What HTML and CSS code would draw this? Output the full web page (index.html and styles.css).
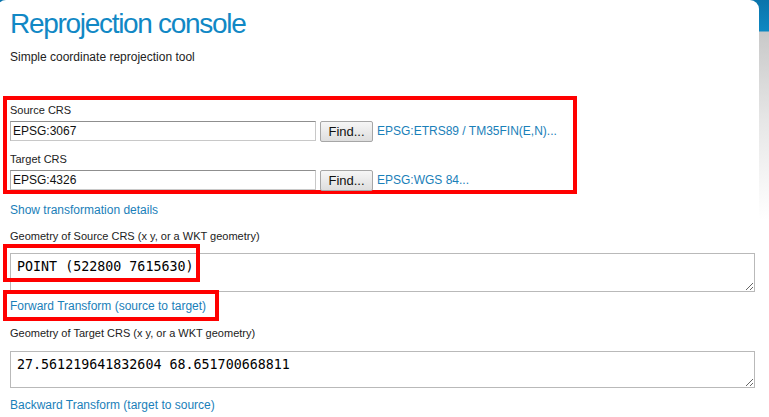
FILE: index.html
```html
<!DOCTYPE html>
<html>
<head>
<meta charset="utf-8">
<link rel="stylesheet" href="styles.css">
</head>
<body>
<div class="page">
  <main class="card">
    <h1 class="title">Reprojection console</h1>
    <p class="subtitle">Simple coordinate reprojection tool</p>

    <section class="crs-box">
      <div class="field-label">Source CRS</div>
      <div class="crs-row">
        <input class="crs-input" type="text" value="EPSG:3067">
        <button class="find-btn" type="button">Find...</button>
        <a class="link" href="#">EPSG:ETRS89 / TM35FIN(E,N)...</a>
      </div>
      <div class="field-label field-label-second">Target CRS</div>
      <div class="crs-row">
        <input class="crs-input" type="text" value="EPSG:4326">
        <button class="find-btn" type="button">Find...</button>
        <a class="link" href="#">EPSG:WGS 84...</a>
      </div>
    </section>

    <a class="link block-link details-link" href="#">Show transformation details</a>

    <div class="field-label geom-label">Geometry of Source CRS (x y, or a WKT geometry)</div>
    <div class="ta-wrap">
      <textarea class="geom-ta">POINT (522800 7615630)</textarea>
      <div class="mark mark-point"></div>
    </div>

    <div class="action-wrap">
      <a class="link block-link" href="#">Forward Transform (source to target)</a>
      <div class="mark mark-forward"></div>
    </div>

    <div class="field-label geom-label-2">Geometry of Target CRS (x y, or a WKT geometry)</div>
    <div class="ta-wrap ta-wrap-2">
      <textarea class="geom-ta geom-ta-2">27.561219641832604 68.651700668811</textarea>
    </div>

    <a class="link block-link backward-link" href="#">Backward Transform (target to source)</a>
  </main>
</div>
</body>
</html>
```

FILE: styles.css
```css
html, body {
  margin: 0;
  padding: 0;
}

body {
  width: 769px;
  height: 417px;
  overflow: hidden;
  font-family: "Liberation Sans", Arial, sans-serif;
  color: #222;
  background: linear-gradient(to bottom, #0a74ab 0, #0d88c2 31px, #c9c9c9 32px, #e6e6e6 120px, #ffffff 220px);
}

.page {
  display: flex;
}

.card {
  width: 747px;
  height: 430px;
  margin-left: -3px;
  padding: 0 2px 0 13px;
  background: #fff;
  border-radius: 9px 9px 0 0;
}

.title {
  margin: 0;
  padding-top: 8px;
  font-size: 28px;
  line-height: 32px;
  font-weight: normal;
  letter-spacing: -1.3px;
  color: #1188c5;
}

.subtitle {
  margin: 10px 0 0;
  font-size: 12px;
  line-height: 14px;
  color: #222;
}

.crs-box {
  width: 563px;
  height: 86px;
  margin: 32px 0 0 -7px;
  padding: 4px 0 0 3px;
  border: 4px solid #ff0000;
  box-sizing: content-box;
}

.field-label {
  font-size: 11px;
  line-height: 13px;
  color: #222;
}

.field-label-second {
  margin-top: 12px;
}

.crs-row {
  display: flex;
  align-items: center;
  gap: 4px;
  margin-top: 4px;
  height: 20px;
}

.crs-input {
  box-sizing: border-box;
  width: 306px;
  height: 20px;
  margin: 0;
  padding: 0 2px;
  border: 1px solid #c8c8c8;
  border-top-color: #8f8f8f;
  border-left-color: #b0b0b0;
  font-family: "Liberation Sans", Arial, sans-serif;
  font-size: 12px;
  color: #111;
  background: #fff;
}

.find-btn {
  box-sizing: border-box;
  width: 53px;
  height: 21px;
  margin: 0;
  padding: 0;
  border: 1px solid #a6a6a6;
  border-radius: 2px;
  background: linear-gradient(to bottom, #f6f6f6, #dedede);
  font-family: "Liberation Sans", Arial, sans-serif;
  font-size: 13px;
  color: #111;
}

.link {
  font-size: 12px;
  line-height: 14px;
  color: #1a80b9;
  text-decoration: none;
}

.block-link {
  display: block;
  width: max-content;
}

.details-link {
  margin-top: 9px;
}

.geom-label {
  margin-top: 13px;
}

.ta-wrap {
  position: relative;
  margin-top: 10px;
  height: 39px;
}

.geom-ta {
  display: block;
  box-sizing: border-box;
  width: 745px;
  height: 39px;
  margin: 0;
  padding: 5px 6px;
  border: 1px solid #b9b9b9;
  font-family: "DejaVu Sans Mono", monospace;
  font-size: 13.333px;
  line-height: 16px;
  color: #000;
  background: #fff;
  resize: vertical;
}

.ta-wrap-2 {
  margin-top: 11px;
  height: 37px;
}

.geom-ta-2 {
  height: 37px;
}

.action-wrap {
  position: relative;
  margin-top: 7px;
}

.geom-label-2 {
  margin-top: 14px;
}

.backward-link {
  margin-top: 10px;
}

.mark {
  position: absolute;
  border: 4px solid #ff0000;
  box-sizing: border-box;
  pointer-events: none;
}

.mark-point {
  left: -7px;
  top: -9px;
  width: 197px;
  height: 38px;
}

.mark-forward {
  left: -7px;
  top: -9px;
  width: 216px;
  height: 31px;
}
```
